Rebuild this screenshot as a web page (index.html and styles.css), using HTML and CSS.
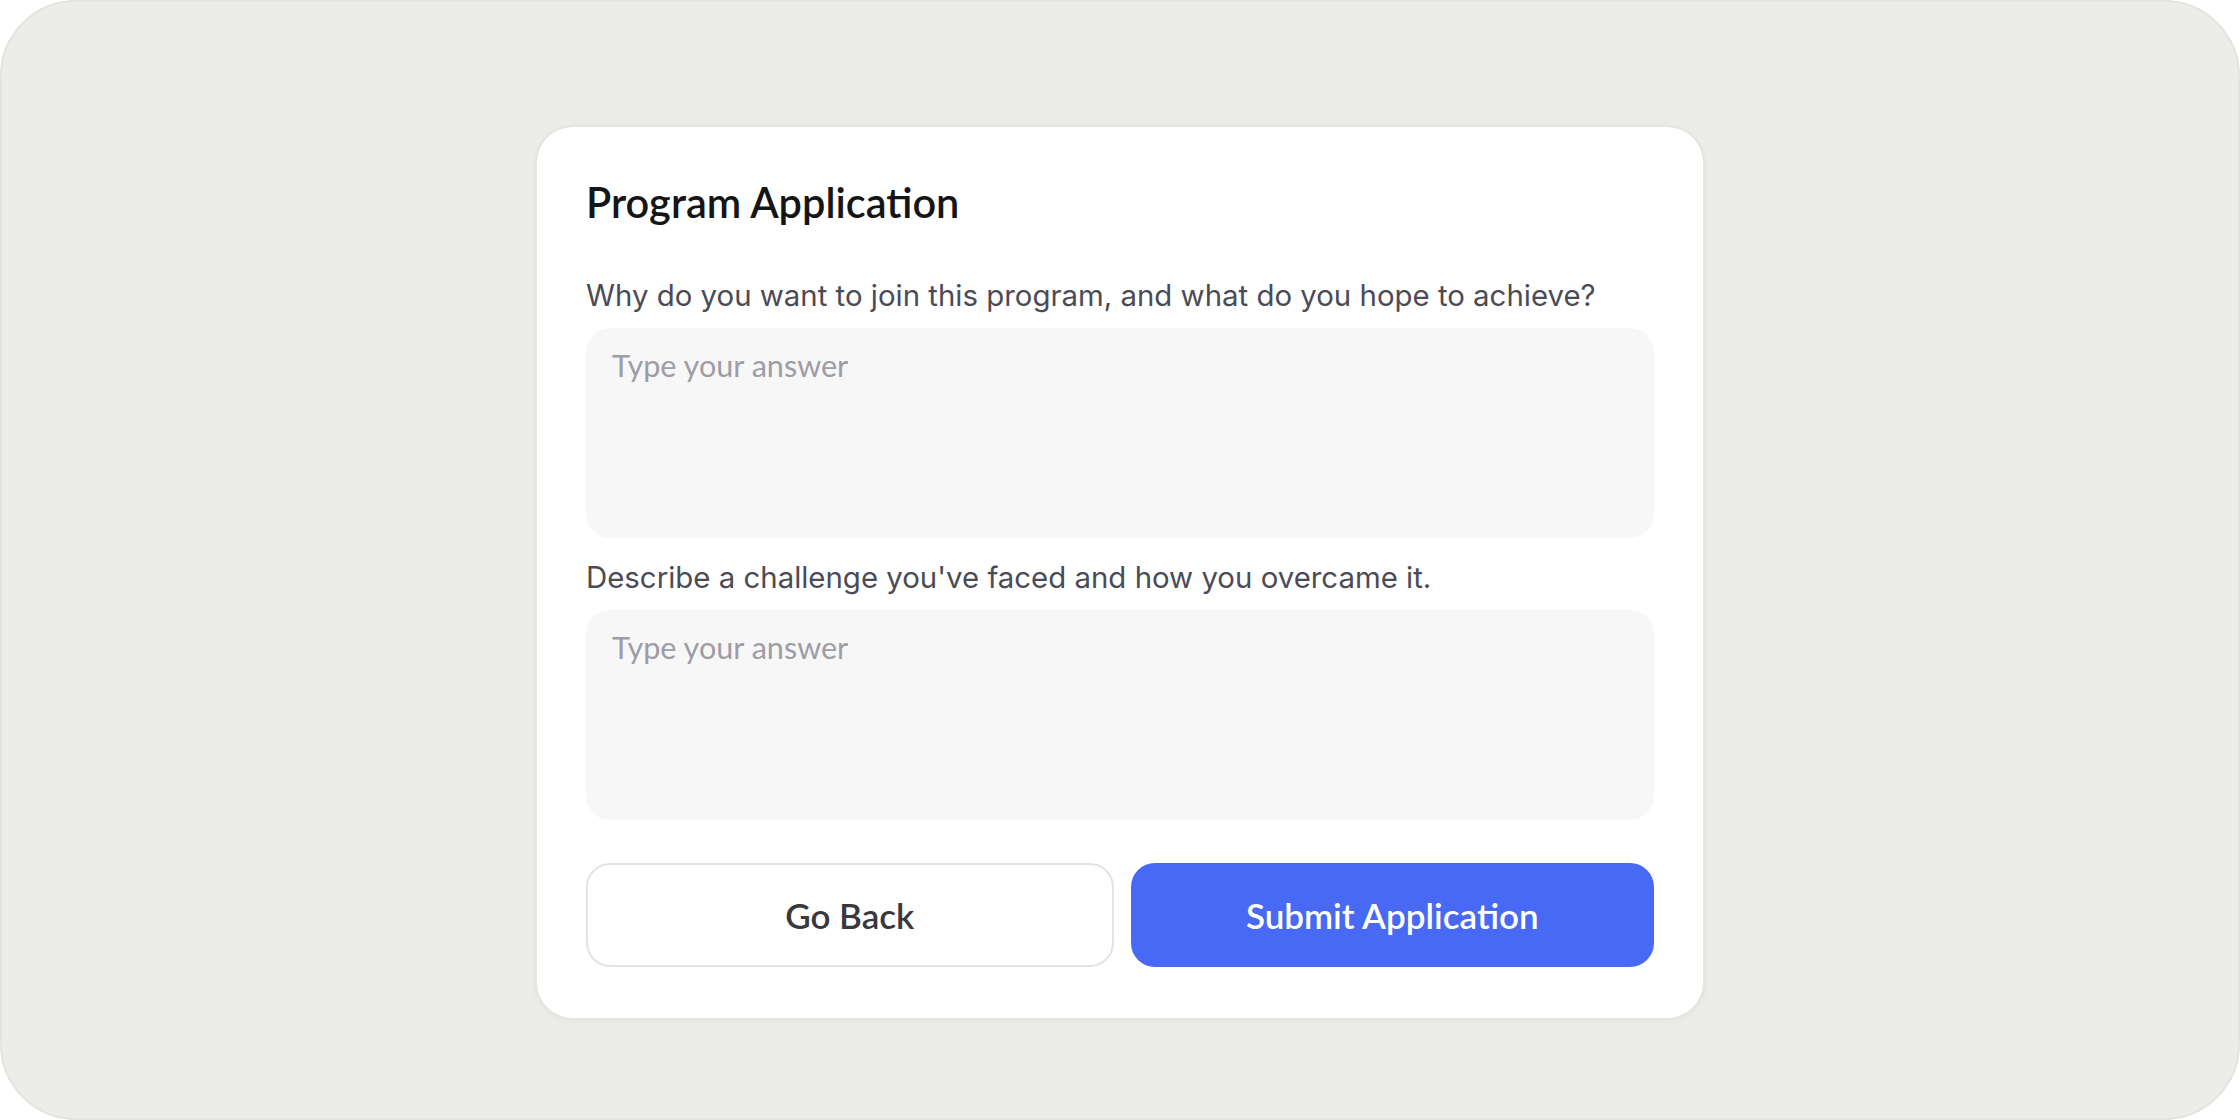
FILE: index.html
```html
<!DOCTYPE html>
<html lang="en">
<head>
    <meta charset="UTF-8">
    <meta name="viewport" content="width=device-width, initial-scale=1.0">
    <title>Program Application</title>
    <link rel="stylesheet" href="styles.css">
</head>
<body>
    <div class="frame">
        <form class="card">
            <h1>Program Application</h1>

            <!-- 질문 1 -->
            <label class="question" for="q1">Why do you want to join this program, and what do you hope to achieve?</label>
            <textarea id="q1" class="answer" placeholder="Type your answer"></textarea>

            <!-- 질문 2 -->
            <label class="question" for="q2">Describe a challenge you've faced and how you overcame it.</label>
            <textarea id="q2" class="answer" placeholder="Type your answer"></textarea>

            <div class="actions">
                <button type="button" class="btn btn-back">Go Back</button>
                <button type="button" class="btn btn-submit">Submit Application</button>
            </div>
        </form>
    </div>
</body>
</html>
```

FILE: styles.css
```css
/* 기본 리셋 */
* {
    margin: 0;
    padding: 0;
    box-sizing: border-box;
}

body {
    background: #ffffff;
    font-family: Inter, "Noto Sans", sans-serif;
}

/* 바깥 프레임 */
.frame {
    width: 2240px;
    height: 1120px;
    border: 2px solid #e3e3df;
    border-radius: 76px;
    background: #ecede8;
    display: flex;
    justify-content: center;
    align-items: center;
    padding-top: 24px;
}

/* 카드 */
.card {
    width: 1170px;
    background: #ffffff;
    border: 2px solid #e4e4e1;
    border-radius: 38px;
    padding: 49px 49px 51px;
    display: flex;
    flex-direction: column;
    box-shadow: 0 2px 6px rgba(0,0,0,0.04);
}

.card h1 {
    font-family: Lato, "Open Sans", sans-serif;
    font-size: 41.5px;
    font-weight: 600;
    line-height: 52px;
    color: #151515;
    margin-bottom: 50px;
}

.question {
    font-size: 29.4px;
    line-height: 36px;
    color: #4b4b55;
    margin-bottom: 14px;
}

.answer {
    height: 210px;
    border: none;
    outline: none;
    resize: none;
    background: #f7f7f7;
    border-radius: 24px;
    padding: 18px 26px;
    font-family: Lato, "Open Sans", sans-serif;
    font-size: 30.6px;
    line-height: 40px;
    color: #333;
    margin-bottom: 22px;
}

.answer::placeholder {
    color: #9d9da5;
}

/* 버튼 영역 */
.actions {
    display: flex;
    gap: 17px;
    margin-top: 21px;
}

.btn {
    flex: 1;
    height: 104px;
    border-radius: 24px;
    font-family: Lato, "Open Sans", sans-serif;
    font-size: 35px;
    font-weight: 600;
    cursor: pointer;
}

.btn-back {
    background: #ffffff;
    border: 2px solid #e3e3e3;
    color: #38383e;
}

.btn-submit {
    background: #4769f5;
    border: none;
    color: #ffffff;
}
```
